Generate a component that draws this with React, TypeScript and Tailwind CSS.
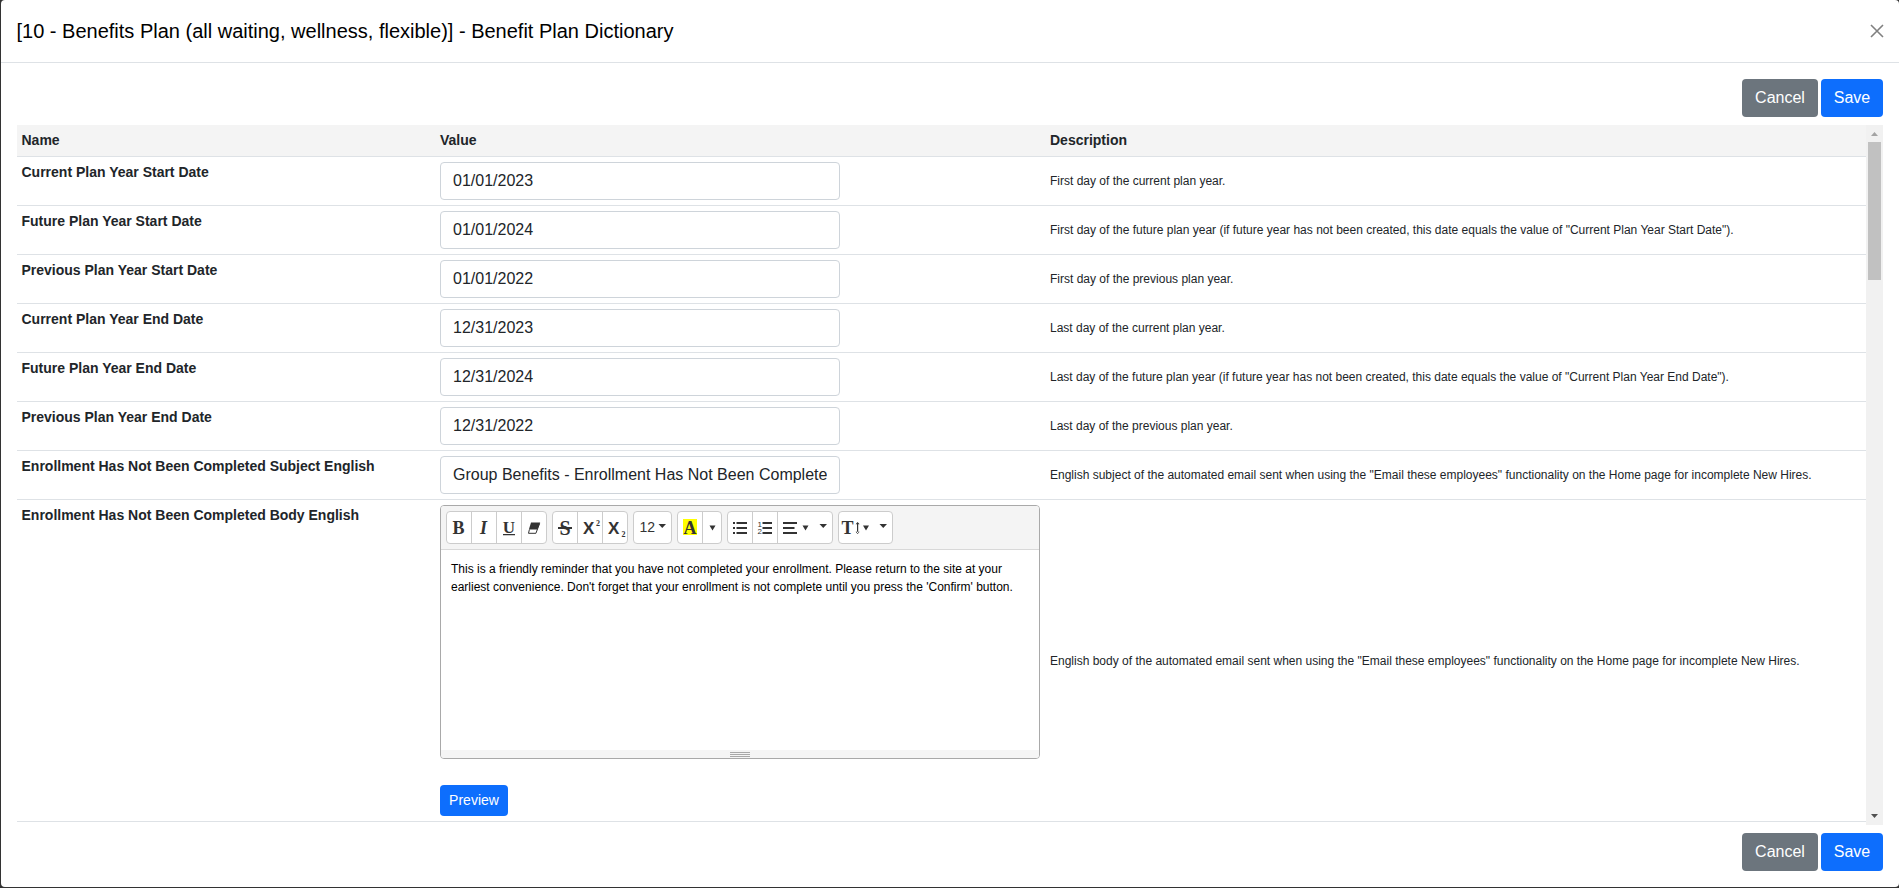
import type { ReactNode } from "react";

type Entry = { name: string; value: string; description: string };

const entries: Entry[] = [
  { name: "Current Plan Year Start Date", value: "01/01/2023", description: "First day of the current plan year." },
  { name: "Future Plan Year Start Date", value: "01/01/2024", description: "First day of the future plan year (if future year has not been created, this date equals the value of \"Current Plan Year Start Date\")." },
  { name: "Previous Plan Year Start Date", value: "01/01/2022", description: "First day of the previous plan year." },
  { name: "Current Plan Year End Date", value: "12/31/2023", description: "Last day of the current plan year." },
  { name: "Future Plan Year End Date", value: "12/31/2024", description: "Last day of the future plan year (if future year has not been created, this date equals the value of \"Current Plan Year End Date\")." },
  { name: "Previous Plan Year End Date", value: "12/31/2022", description: "Last day of the previous plan year." },
  { name: "Enrollment Has Not Been Completed Subject English", value: "Group Benefits - Enrollment Has Not Been Complete", description: "English subject of the automated email sent when using the \"Email these employees\" functionality on the Home page for incomplete New Hires." },
];

const columns = "grid grid-cols-[418.5px_610px_1fr] pl-[4.5px]";

function Actions() {
  return (
    <div className="flex justify-end gap-[3px]">
      <button className="h-[38px] w-[76px] rounded bg-[#6c757d] text-base text-white">Cancel</button>
      <button className="h-[38px] w-[62px] rounded bg-[#0d6efd] text-base text-white">Save</button>
    </div>
  );
}

function Group({ children, className = "" }: { children: ReactNode; className?: string }) {
  return (
    <div className={`flex h-[33px] divide-x divide-[#ccc] overflow-hidden rounded-[4px] border border-[#ccc] bg-white text-[#333] ${className}`}>
      {children}
    </div>
  );
}

function Tool({ children, label, className = "w-[25px]" }: { children: ReactNode; label: string; className?: string }) {
  return (
    <button aria-label={label} className={`flex h-[31px] shrink-0 items-center justify-start ${className}`}>
      {children}
    </button>
  );
}

function Icon({ w = 24, children }: { w?: number; children: ReactNode }) {
  return (
    <svg width={w} height={31} viewBox={`0 0 ${w} 31`} fill="#333" className="block shrink-0">
      {children}
    </svg>
  );
}

const serif = "'Liberation Serif', serif";
const sans = "'Liberation Sans', sans-serif";

function Toolbar() {
  return (
    <div className="flex h-[44px] gap-[5px] border-b border-[#d8d8d8] bg-[#f4f4f4] pt-[5px] pl-[5px]">
      <Group className="w-[101px]">
        <Tool label="Bold">
          <Icon><text x="11.5" y="22" textAnchor="middle" fontFamily={serif} fontWeight="700" fontSize="18">B</text></Icon>
        </Tool>
        <Tool label="Italic">
          <Icon><text x="11.5" y="22" textAnchor="middle" fontFamily={serif} fontWeight="700" fontStyle="italic" fontSize="18">I</text></Icon>
        </Tool>
        <Tool label="Underline">
          <Icon>
            <text x="12" y="20.5" textAnchor="middle" fontFamily={serif} fontWeight="700" fontSize="17">U</text>
            <path d="M6 22h12v1.200H6z" />
          </Icon>
        </Tool>
        <Tool label="Remove font style">
          <Icon>
            <path d="M9 10.500H18.200L15.400 17.500H6.900z" />
            <path d="M7.400 17.500L6.500 21.300H13.900L17.600 11.500" fill="none" stroke="#333" />
          </Icon>
        </Tool>
      </Group>
      <Group className="w-[76px]">
        <Tool label="Strikethrough">
          <Icon>
            <text x="12" y="22.500" textAnchor="middle" fontFamily={serif} fontWeight="700" fontSize="20">S</text>
            <path d="M5 15h14v2H5z" />
          </Icon>
        </Tool>
        <Tool label="Superscript">
          <Icon>
            <text x="5" y="22" fontFamily={sans} fontWeight="700" fontSize="17">X</text>
            <text x="18" y="13.500" fontFamily={serif} fontWeight="700" fontSize="8">2</text>
          </Icon>
        </Tool>
        <Tool label="Subscript">
          <Icon>
            <text x="5" y="22" fontFamily={sans} fontWeight="700" fontSize="17">X</text>
            <text x="18.500" y="25" fontFamily={serif} fontWeight="700" fontSize="8">2</text>
          </Icon>
        </Tool>
      </Group>
      <Group className="w-[39px]">
        <Tool label="Font size" className="w-[37px]">
          <Icon w={37}>
            <text x="5.500" y="20" fontFamily={sans} fontSize="14">12</text>
            <path d="M24.500 12h7.500l-3.750 4z" />
          </Icon>
        </Tool>
      </Group>
      <Group className="w-[45px]">
        <Tool label="Recent color">
          <Icon>
            <path d="M5 7h14v16H5z" fill="#ffff00" />
            <text x="12" y="21.500" textAnchor="middle" fontFamily={serif} fontWeight="700" fontSize="18">A</text>
          </Icon>
        </Tool>
        <Tool label="More colors" className="w-[18px]">
          <Icon w={18}><path d="M6.500 13.500h6l-3 5z" /></Icon>
        </Tool>
      </Group>
      <Group className="w-[106px]">
        <Tool label="Bulleted list">
          <Icon>
            <path d="M5 10h2v2H5zM5 15h2v2H5zM5 20h2v2H5zM8.500 10H19v2H8.500zM8.500 15H19v2H8.500zM8.500 20H19v2H8.500z" />
          </Icon>
        </Tool>
        <Tool label="Numbered list">
          <Icon>
            <text x="4.500" y="15" fontFamily={sans} fontSize="8">1</text>
            <text x="4.500" y="22" fontFamily={sans} fontSize="8">2</text>
            <path d="M9.500 10H19v2H9.500zM9.500 15H19v2H9.500zM9.500 20H19v2H9.500z" />
          </Icon>
        </Tool>
        <Tool label="Paragraph" className="w-[54px]">
          <Icon w={54}>
            <path d="M5 10h14v2H5zM5 15h11.500v2H5zM5 20h14v2H5zM24.500 13.500h6l-3 5zM41.500 12H49l-3.750 4z" />
          </Icon>
        </Tool>
      </Group>
      <Group className="w-[55px]">
        <Tool label="Line height" className="w-[53px]">
          <Icon w={53}>
            <text x="2.500" y="22" fontFamily={serif} fontWeight="700" fontSize="18">T</text>
            <path d="M18 11h1.200v10H18zM16.600 12.300l2-2.300 2 2.300zM16.600 19.700l2 2.300 2-2.300zM24 13.500h6l-3 5zM40.500 12H48l-3.750 4z" />
          </Icon>
        </Tool>
      </Group>
    </div>
  );
}

function Editor() {
  return (
    <div className="flex h-[254px] w-[600px] flex-col overflow-hidden rounded-[4px] border border-[#a9a9a9] bg-white">
      <Toolbar />
      <div className="grow px-2.5 pt-2.5 text-xs leading-[18px] text-black">
        <p>This is a friendly reminder that you have not completed your enrollment. Please return to the site at your</p>
        <p>earliest convenience. Don't forget that your enrollment is not complete until you press the 'Confirm' button.</p>
      </div>
      <div className="flex h-2 flex-col items-center gap-px bg-[#f5f5f5] pt-[2px]">
        <i className="h-px w-5 bg-[#a9a9a9]" />
        <i className="h-px w-5 bg-[#a9a9a9]" />
        <i className="h-px w-5 bg-[#a9a9a9]" />
      </div>
    </div>
  );
}

function Scrollbar() {
  return (
    <div className="flex h-[700px] w-[17px] flex-col bg-[#f1f1f1]">
      <svg width="17" height="17" viewBox="0 0 17 17"><path d="M5 11h7L8.500 7z" fill="#a3a3a3" /></svg>
      <div className="mx-0.5 h-[138px] w-[13px] bg-[#c1c1c1]" />
      <svg width="17" height="17" viewBox="0 0 17 17" className="mt-auto"><path d="M5 6h7L8.500 10z" fill="#505050" /></svg>
    </div>
  );
}

export default function App() {
  return (
    <div className="h-[888px] w-[1899px] overflow-hidden bg-[#333] pb-px pl-px font-['Liberation_Sans',Arial,sans-serif] text-[#212529]">
      <div className="h-[887px] rounded-[4px] bg-white">
        <header className="flex h-[63px] items-center justify-between border-b border-[#dee2e6] pr-[15px] pl-[15.5px]">
          <h1 className="text-xl leading-[30px] text-black">[10 - Benefits Plan (all waiting, wellness, flexible)] - Benefit Plan Dictionary</h1>
          <svg width="14" height="14" viewBox="0 0 14 14" stroke="#808080" strokeWidth="1.6"><path d="M1 1l12 12M13 1L1 13" /></svg>
        </header>
        <main className="px-4 pt-4">
          <Actions />
          <div className="mt-2 mb-2 flex h-[700px]">
            <div className="w-[1849px]">
              <div className={`${columns} h-8 border-b border-[#dee2e6] bg-[#f4f4f4] text-sm leading-[30px] font-bold`}>
                <span>Name</span>
                <span>Value</span>
                <span>Description</span>
              </div>
              {entries.map((entry) => (
                <div key={entry.name} className={`${columns} h-[49px] border-b border-[#dee2e6]`}>
                  <span className="pt-[5px] text-sm leading-[21px] font-bold">{entry.name}</span>
                  <div className="pt-[5px]">
                    <input readOnly value={entry.value} className="block h-[38px] w-[400px] rounded border border-[#ced4da] bg-white px-3 text-base text-[#212529] outline-none" />
                  </div>
                  <span className="self-center text-xs">{entry.description}</span>
                </div>
              ))}
              <div className={`${columns} h-[322px] border-b border-[#dee2e6]`}>
                <span className="pt-[5px] text-sm leading-[21px] font-bold">Enrollment Has Not Been Completed Body English</span>
                <div className="pt-[5px]">
                  <Editor />
                  <button className="mt-[26px] block h-[31px] w-[68px] rounded bg-[#0d6efd] pb-0.5 text-sm text-white">Preview</button>
                </div>
                <span className="self-center text-xs">English body of the automated email sent when using the "Email these employees" functionality on the Home page for incomplete New Hires.</span>
              </div>
            </div>
            <Scrollbar />
          </div>
          <Actions />
        </main>
      </div>
    </div>
  );
}
